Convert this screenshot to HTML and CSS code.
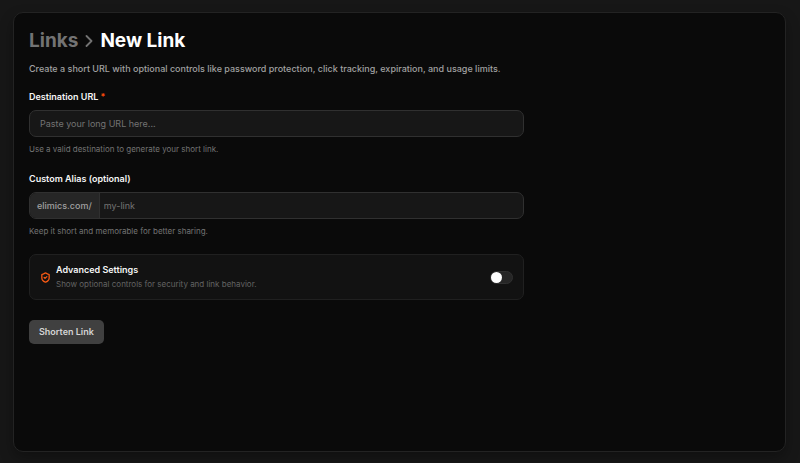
FILE: index.html
```
<!DOCTYPE html>
<html lang="en">
<head>
  <meta charset="UTF-8"/>
  <meta name="viewport" content="width=device-width, initial-scale=1.0"/>
  <title>New Link</title>
  <link rel="stylesheet" href="styles.css">
</head>
<body>

  <main class="panel">
    <h1 class="breadcrumb">
      <a href="#links">Links</a>
      <svg class="chevron" viewBox="0 0 8 12" aria-hidden="true">
        <path d="M1.5 1 6.5 6 1.5 11"/>
      </svg>
      <span>New Link</span>
    </h1>
    <p class="intro">Create a short URL with optional controls like password protection, click tracking, expiration, and usage limits.</p>

    <form class="link-form">
      <div class="field">
        <label for="destination">Destination URL <span class="required">*</span></label>
        <input class="control" type="text" id="destination" placeholder="Paste your long URL here..." required />
        <p class="hint">Use a valid destination to generate your short link.</p>
      </div>

      <div class="field">
        <label for="alias">Custom Alias (optional)</label>
        <div class="control alias-group">
          <span class="prefix">elimics.com/</span>
          <input type="text" id="alias" placeholder="my-link" />
        </div>
        <p class="hint">Keep it short and memorable for better sharing.</p>
      </div>

      <div class="advanced">
        <svg class="shield" viewBox="0 0 24 24" aria-hidden="true">
          <path d="M20 13c0 5-3.5 7.500-7.660 8.950a1 1 0 0 1-.67-.01C7.500 20.500 4 18 4 13V6a1 1 0 0 1 1-1c2 0 4.500-1.200 6.240-2.720a1.170 1.170 0 0 1 1.520 0C14.510 3.810 17 5 19 5a1 1 0 0 1 1 1z"/>
          <path d="m9 12 2 2 4-4"/>
        </svg>
        <div class="advanced-text">
          <label for="advanced">Advanced Settings</label>
          <p>Show optional controls for security and link behavior.</p>
        </div>
        <input class="toggle" type="checkbox" role="switch" id="advanced" />
      </div>

      <button type="submit" class="btn">Shorten Link</button>
    </form>
  </main>

</body>
</html>
```
FILE: styles.css
```
* {
  box-sizing: border-box;
}

body {
  font-family: Inter, sans-serif;
  font-size: 9px;
  line-height: 14px;
  margin: 0;
  min-height: 100vh;
  padding: 12px 14px 11px 13px;
  display: flex;
  background-color: #171717;
  color: #f5f5f5;
}

h1,
p {
  margin: 0;
}

.panel {
  flex: 1;
  padding: 15px;
  background-color: #0a0a0a;
  border: 1px solid #232323;
  border-radius: 10px;
  box-shadow: 0 6px 14px rgba(0, 0, 0, 0.3);
}

.breadcrumb {
  display: flex;
  align-items: center;
  gap: 7px;
  font-size: 19px;
  line-height: 26px;
  font-weight: 700;
  color: #fff;
}

.breadcrumb a {
  color: #737373;
  text-decoration: none;
}

.chevron {
  width: 8px;
  height: 12px;
  fill: none;
  stroke: #737373;
  stroke-width: 1.8;
  stroke-linecap: round;
  stroke-linejoin: round;
}

.intro {
  margin-top: 8px;
  font-weight: 500;
  color: #a1a1a1;
}

.link-form {
  width: 66.8%;
  margin-top: 14px;
  display: flex;
  flex-direction: column;
  align-items: flex-start;
  gap: 16px;
}

.field {
  width: 100%;
}

label {
  display: block;
  font-weight: 600;
}

.required {
  color: #ff4d0a;
}

.control {
  display: block;
  width: 100%;
  height: 27px;
  margin-top: 6px;
  background-color: #171717;
  border: 1px solid #303030;
  border-radius: 7px;
}

input {
  font: inherit;
  color: #f5f5f5;
}

input::placeholder {
  color: #737373;
  opacity: 1;
}

input.control {
  padding: 0 10px;
}

.alias-group {
  display: flex;
  overflow: hidden;
}

.prefix {
  display: flex;
  align-items: center;
  padding: 0 7px;
  font-weight: 500;
  color: #a1a1a1;
  background-color: #262626;
  border-right: 1px solid #303030;
}

.alias-group input {
  flex: 1;
  min-width: 0;
  padding: 0 4px;
  background: none;
  border: 0;
}

.hint {
  margin-top: 5px;
  font-size: 8px;
  color: #737373;
}

.advanced {
  width: 100%;
  display: flex;
  align-items: center;
  gap: 5px;
  padding: 8px 10px;
  background-color: #121212;
  border: 1px solid #202020;
  border-radius: 7px;
}

.shield {
  width: 11px;
  height: 11px;
  fill: none;
  stroke: #f95a14;
  stroke-width: 2.8;
  stroke-linecap: round;
  stroke-linejoin: round;
}

.advanced-text {
  flex: 1;
}

.advanced-text p {
  font-size: 8px;
  color: #636363;
}

.toggle {
  appearance: none;
  display: flex;
  align-items: center;
  width: 23px;
  height: 13px;
  margin: 0;
  background-color: #262626;
  border: 1px solid #303030;
  border-radius: 7px;
  cursor: pointer;
}

.toggle::before {
  content: "";
  width: 11px;
  height: 11px;
  background-color: #fff;
  border-radius: 50%;
}

.toggle:checked {
  background-color: #f95a14;
}

.toggle:checked::before {
  margin-left: auto;
}

.btn {
  height: 24px;
  margin-top: 4px;
  padding: 0 10px;
  font: inherit;
  font-weight: 600;
  color: #d4d4d4;
  background-color: #404040;
  border: none;
  border-radius: 5px;
  cursor: pointer;
}

.btn:hover {
  background-color: #4a4a4a;
}
```
